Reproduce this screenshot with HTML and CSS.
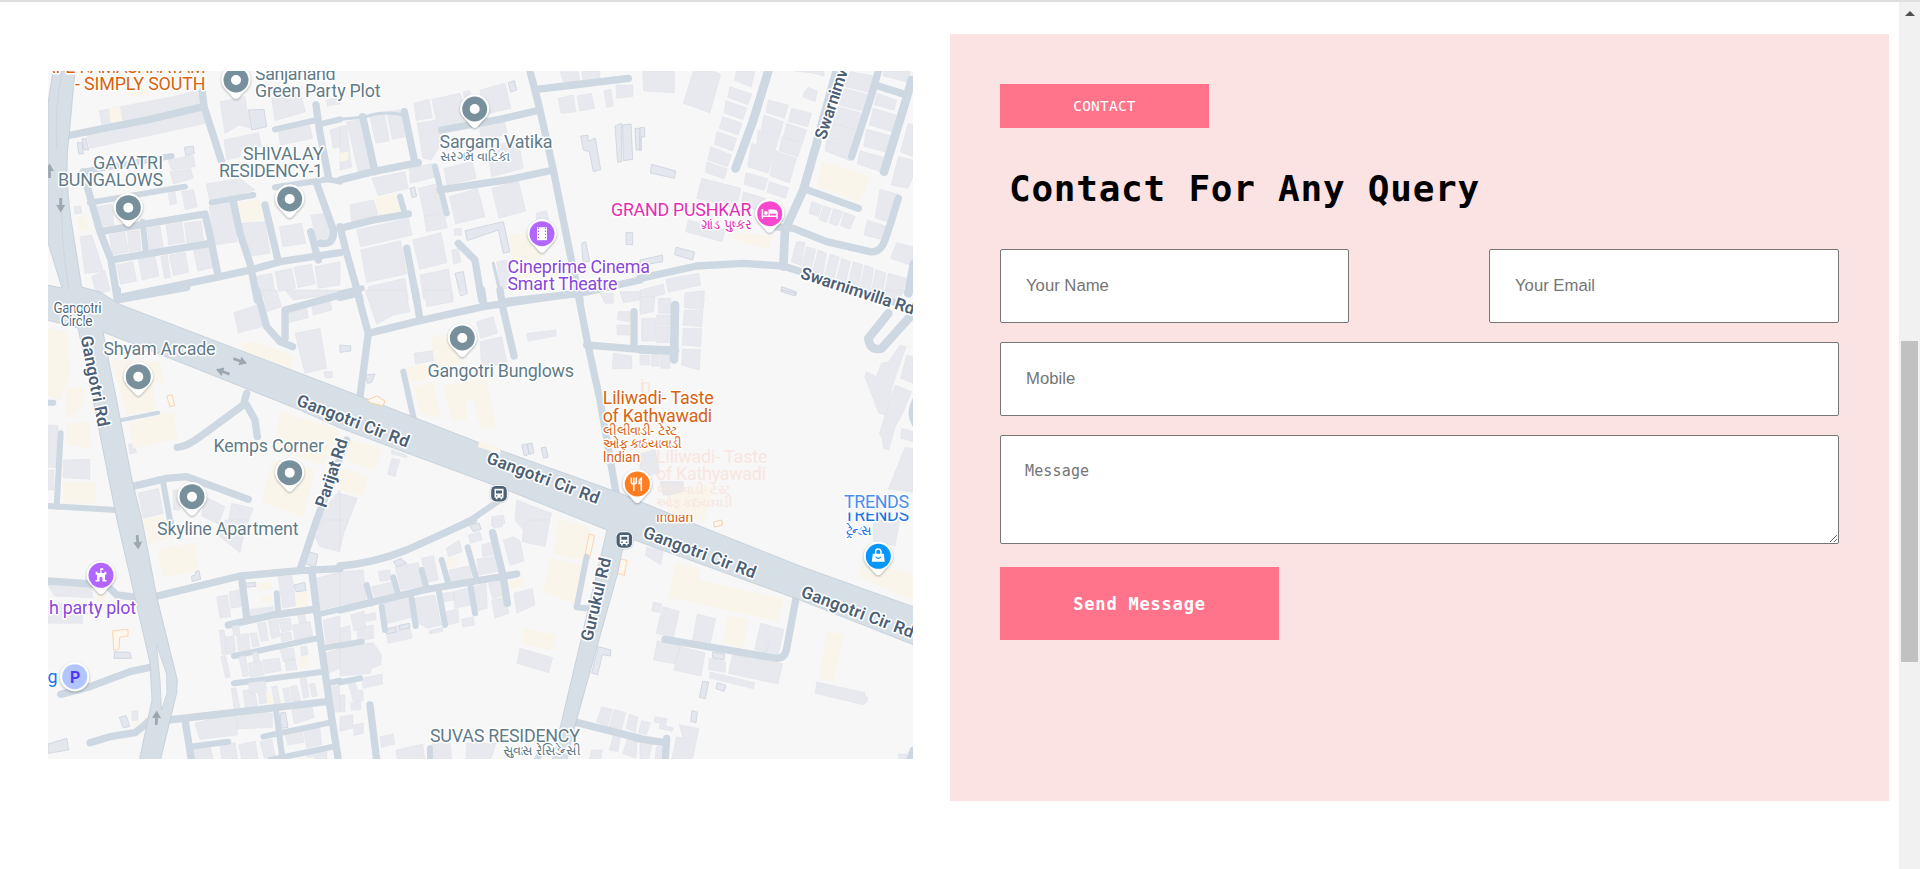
FILE: index.html
```
<!DOCTYPE html>
<html lang="en">
<head>
<meta charset="utf-8">
<title>Contact</title>
<link rel="stylesheet" href="styles.css">
</head>
<body>
<div class="page">
<main class="content">
<svg class="map" viewBox="48 71 865 688" width="865" height="688">
<defs>
<path id="pin" d="M-14.7 0A14.7 14.7 0 1 1 14.7 0C14.7 7 8 11 3 17.5Q0 20.500-3 17.500C-8 11-14.700 7-14.700 0Z"/>
<g id="place"><use href="#pin" class="pin-base"/><circle r="12.500" fill="#78909c"/><circle r="5" fill="#fff"/></g>
<g id="bus"><rect x="-9" y="-9" width="18" height="18" rx="6" fill="#fff" stroke="#c3cbd3" stroke-width=".6"/><rect x="-7.800" y="-7.800" width="15.600" height="15.600" rx="5" fill="#4a6076"/><path fill="#fff" d="M-4.500-5h9V4h-1.300v1.500h-1.700V4h-3v1.500h-1.700V4h-1.300z"/><path fill="#4a6076" d="M-3-3.200h6v3h-6zM-3 1.500h1.400v1.400H-3zM1.600 1.500H3v1.400H1.600z"/></g>
<path id="arrow" d="M-1.400-7H1.400V0H4.500L0 7.500-4.500 0H-1.400Z" fill="#9ca8b1"/>
<clipPath id="indianClip"><rect x="650" y="515" width="60" height="20"/></clipPath>
<clipPath id="trendsClip"><rect x="840" y="512.500" width="73" height="20"/></clipPath>
</defs>
<rect x="48" y="71" width="865" height="688" fill="#f7f7f7"/>

<!-- buildings -->
<g transform="translate(40 60) scale(.33333)">
<path class="b" d="M178 152L400 110 480 90 490 140 408 152 185 192ZM140 225L490 150 497 190 150 265ZM540 125L615 110 630 205 598 195 555 220ZM695 115L780 100 797 155 705 182ZM712 200L805 180 818 235 722 255ZM552 240L655 218 665 260 605 262 600 290 560 300ZM385 300L460 285 465 320 395 330ZM390 335L452 325 460 355 400 372ZM425 395L460 388 472 440 436 450ZM385 400l20-5 5 35-20 5ZM498 372L600 355 645 390 510 425ZM508 440L570 430 592 545 522 555ZM605 490L675 485 690 580 620 590ZM718 500L785 490 797 550 728 560ZM812 465L860 460 870 530 830 545ZM172 440L215 432 222 495 180 500ZM208 525L255 515 265 575 218 585ZM262 515L298 510 303 570 268 577ZM322 505L360 498 370 565 328 575ZM378 495l48-8 8 60-48 8ZM433 490l50-8 8 58-50 8ZM230 615l48-10 12 58-48 10ZM295 598l50-10 12 60-50 12ZM362 590l20-4 10 66-18 4ZM388 585l48-8 10 60-46 10ZM460 570l50-8 10 60-46 12ZM120 530l35-5 20 60 15 50-55 5ZM155 650l40-18 15 60-40 10ZM645 650l50-10 10 60-50 12ZM705 635l50-10 12 60-50 10ZM762 622l52-9 12 58-52 12ZM825 620l75-15v70l-65 10ZM870 210L900 200V260L880 265ZM860 120l40-8v20l-38 6ZM102 440l20-3 3 22-20 4Z"/>
<path class="o" d="M112 248h14l4 34h-14ZM126 236h12l8 34h-14ZM625 150L672 148 680 200 635 210ZM433 262L460 258 463 280 437 286Z"/>
<path class="y" d="M207 145L240 140 247 183 212 190ZM255 75L330 90 325 105 258 105ZM590 428L660 418 670 480 605 487ZM107 470l30-5 10 45-30 5ZM24 515h10v42h-10Z"/>
</g>
<g transform="translate(340 60) scale(.33333)">
<path class="b" d="M88 165l45-8 15 85-40 8ZM140 155l40-5 15 80-38 8ZM20 185l55-8 18 160-35 10ZM0 200l20-4 15 125-35 10ZM222 130l45-12 10 55-48 8ZM232 190l55-10 22 60-35 60-25-5ZM275 118l85-18 30 80-95 25ZM420 90l75-20 18 75-85 20ZM312 325l85-20 12 50-88 20ZM440 260l95-20 15 85-95 25ZM418 200l75-15 10 40-80 10ZM95 355l100-20 10 50-90 22ZM208 325l75-15 8 40-80 20ZM235 385l60-15 18 85-60 15ZM30 435l70-15 15 45-80 20ZM50 510l155-35 12 50-155 35ZM62 570l120-28 18 100-120 25ZM218 540l85-22 18 90-82 20ZM252 470l60-12 10 45-62 12ZM85 680l110-25 10 65H90ZM240 645l85-18 15 90H250ZM328 410l85-25 22 85-88 22ZM455 385l80-22 22 90-80 22ZM588 460l32-8 6 30-35 5ZM655 115l45-10 8 50-45 5ZM712 108l42-8 10 45-45 8ZM792 92l20-4 8 50-20 4ZM828 75h50v35l-48 5ZM660 35h55l5 30-45 12ZM725 33h55v30l-50 8ZM470 605l30-5 15 80-35 10ZM342 508l22-4v22h-20ZM335 570l20-4 8 40-22 6ZM370 95l20-3 3 20-20 3Z"/>
<path class="o" d="M505 68l18-6 7 28-18 6ZM375 512L490 485 510 575 490 580 475 510 382 542ZM725 550l12-5 12 58-20 5ZM345 640l25-5 12 65-20 8ZM858 518h20v36h-20ZM722 228l22-2v18l22-10 16 95-22 6-12-60-18-5ZM825 198l20-8v115l-12 2ZM848 195l25-3 5 106-28 4ZM885 205h15v65h-12ZM210 385l14-4 6 28-14 4Z"/>
<path class="y" d="M0 278l25-3v25l-25 5ZM105 415l65-15 10 60-65 12ZM508 525L600 510 612 640 530 660Z"/>
</g>
<g transform="translate(640 60) scale(.33333)">
<path class="b" d="M8 33h95v65l-92-5ZM160 33h60l22 10-32 115-80-28ZM290 33h55l-12 48-50-20ZM270 80l65 22-12 32-60-22ZM258 122l62 22-12 35-56-20ZM248 170l58 20-12 35-56-20ZM230 215l60 20-12 38-54-20ZM212 260l62 25-12 35-58-20ZM200 305l62 22-10 30-55-20ZM385 120l60 15-12 40-55-18ZM372 165l58 20-12 45-55-20ZM355 210l62 22-12 40-55-18ZM335 250l68 25-18 65-62-20ZM318 338l66 18-12 35-60-18ZM455 145l60 15-12 40-58-15ZM440 190l60 20-12 38-58-16ZM425 230l62 20-14 40-55-18ZM405 272l65 22-22 75-58-22ZM388 365l58 18-10 32-55-18ZM185 355l118 30-15 60-118-30ZM310 395l65 20-10 40-62-20ZM145 480l110 30-8 35-110-30ZM490 100l15-18 28 12-8 30-35-12ZM632 35l78 15-15 50-85-22ZM612 85l85 22-15 50-85-22ZM595 140l80 22-12 50-85-22ZM580 190l75 22-14 45-78-22ZM560 238l80 22-10 42-75-30ZM700 145l68 20-12 50-68-20ZM680 208l75 20-12 50-72-20ZM660 272l70 20-10 42-68-22ZM710 100l60 20-8 30-58-15ZM730 33h80v35l-80-20ZM805 190l14 5v95l-38-15ZM775 290l44 10v50l-15 35-50-10ZM720 388l55 15-25 85-45-15ZM682 480l60 20-12 40-58-15ZM515 425l30 10-10 35-28-10ZM550 437l24 8-15 42-22-8ZM580 445l28 10-16 42-24-8ZM612 457l34 12-16 38-28-10ZM770 548l49 12v40l-10 15-58-20ZM470 545l25 2-12 70-30-12ZM500 560l28 8-15 62-28-12ZM535 570l25 10-12 65-30-12ZM570 582l28 10-15 62-28-12ZM605 595l26 10-14 66-28-12ZM640 605l28 10-14 74-32-12ZM675 615l26 10-12 75-32-10ZM708 628l30 12-12 70-34-8ZM745 640l55 15-18 60-50-8ZM0 690l70-18 5 30-75 18ZM78 658l98-18 6 35-98 22ZM462 33h90v15l-40-10ZM135 705l50-12 8 27h-50Z"/>
<path class="o" d="M35 313l72 20-4 22-72-16ZM108 562l56 14-6 24-54-16ZM0 600l68-15v20l-68 12ZM425 680l45 16-3 10-43-16ZM0 203h14v28H4v40H0Z"/>
<path class="y" d="M545 302L692 350 660 425 530 380ZM280 515L395 530 385 570 275 535Z"/>
</g>
<g transform="translate(40 290) scale(.33333)">
<path class="b" d="M24 405l30 2v125H24ZM70 510l80-2v60l-80-5ZM24 540h18v60H24ZM265 462h15l10 25-20 5ZM582 68L650 45 668 110 595 128ZM668 0h42l15 50-45 15ZM735 0h165v10l-140 20ZM765 130L840 115 860 235 795 250ZM745 68l55-15 5 30-60 15ZM815 45l55-15 5 30-55 15ZM852 245h25v18h-22ZM295 610l60-15 15 75-60 15ZM495 620l60 30-20 52-50-25ZM575 640l65 15-20 50-55-10ZM400 600h15l5 60h-20ZM850 660l50-60v120h-70Z"/>
<path class="y" d="M24 115L80 125 90 250 60 330 24 320ZM75 290l60 5-5 45-30 45-20-5ZM80 400l70-5 5 80-75-10ZM215 210L360 215 372 275 340 280 350 360 260 375ZM265 400L400 365 415 445 280 475ZM600 160L650 155 760 200 755 235 610 185ZM720 365L900 420V440L850 525 700 480ZM700 510L825 540 790 680 665 635ZM68 575h98v65H68ZM310 690l60-15 8 45h-62Z"/>
<path class="r" d="M380 318l16-4 8 32-14 5Z"/>
</g>
<g transform="translate(340 290) scale(.33333)">
<path class="b" d="M75 0h120l15 65-50 10-50 28ZM255 0h75l10 35-80 15ZM410 95l50-15 12 50-50 15ZM420 155l65-15 15 75-75 25ZM222 190l55-8 5 30-55 10ZM560 130l88-10v18l-84 16ZM835 65h35v30l-38-5ZM830 105h38v30h-36ZM820 190l55 8v38h-58ZM155 505l25 5-15 50-22-8ZM0 610L52 625 15 720H0ZM530 630L635 670 620 720H550l-25-30ZM455 680l35-5 5 25-40 10ZM780 10h40v30h-25ZM840 5h60v25l-50 8ZM155 480l45 15v8l-45-12ZM355 0h25v15h-20Z"/>
<path class="y" d="M272 145L330 130 370 220 290 240ZM198 235l65-15 5 45-60 15ZM220 290l60-15 22 110-60-15ZM310 285L440 265 468 410 425 418 400 330 375 335 382 390 335 392ZM30 450L130 475 100 540 20 510ZM0 530L85 560 70 620 0 600ZM655 685l90 30h-92Z"/>
<path class="o" d="M545 465l15-3 8 30-15 6ZM562 462l14-3 6 30-14 4ZM603 474l14-3 8 30-14 4ZM0 165l32 3v15l-32 4ZM75 255l30-3-10 25-12 3Z"/>
</g>
<g transform="translate(640 290) scale(.33333)">
<path class="b" d="M0 20h45l-5 45-40 8ZM55 25h38v45h-38ZM50 75h40v30h-40ZM50 108h38v50h-38ZM5 85h42v68H5ZM135 8l58-5-3 55-57-5ZM133 60l56 0-4 50-56-5ZM130 115l55 0-3 55-56-5ZM127 178l54 0-3 62-53-15ZM0 195h30v30H0ZM35 193h23v36h-23ZM62 195h28v40h-28ZM780 165l18 5-40 115-20 90-22-5-22-60-20-50 5-15 30 15 15-40 22-5ZM765 285l50 20-25 60-24 45-20 70-15-5-5-30-8-15ZM800 195l20 5v80l-38-15ZM785 415l35 10v30l-38-10ZM795 472l25 5v130l-75-10ZM0 480h45l15 70-60 10ZM60 575h70v40h-60ZM725 0h85l-10 12Z"/>
<path class="y" d="M80 620l110-35 30 10-30 100-110-30ZM0 430h18l20 50-38 10Z"/>
<path class="o" d="M425 0l43 10-3 8-43-14Z"/>
</g>
<g transform="translate(40 520) scale(.33333)">
<path class="b" d="M540 50l15-50h65l-20 98ZM24 195h130l5 38-115-5ZM24 250h103v60H24ZM530 230l32-5 10 65-32 4ZM568 215l30-5 5 50-30 5ZM714 170l42-3 12 90-40 8ZM630 268l70-8 4 22-72 10ZM825 50l30-50h45v95l-60-15ZM538 330l14 0 12 55 18-3 4 18-40 5ZM552 352l30-5 5 45-30 5ZM590 345l35-4 5 45-35 8ZM630 340l20-2 8 40-20 4ZM652 310l25-4 8 55-22 3ZM685 302l28-4 8 50-26 8ZM715 298l36-4 5 35-30 8ZM758 315l52-10 8 42-55 12ZM722 340l30-4 4 22-32 8ZM772 280l20-3 8 30-22 3ZM542 410l15-3 14 64-14 3ZM597 410l18-3 12 60-18 3ZM625 430l40-6 8 40-42 8ZM640 400l14-2 4 26-16 3ZM668 420l50-6 6 38-48 8ZM720 388l40-4 6 34-36 8ZM735 420l30-4 6 32-32 4ZM782 380l18-2 4 26-20 3ZM574 505l14-2 12 60-18 3ZM608 512l35-5 10 50-36 8ZM655 520l28-3 6 30-30 5ZM695 500l16-3 10 52-18 3ZM728 506l18-3 10 40-20 4ZM750 500l20-4 12 46-22 4ZM780 475l18-4 10 60-18 4ZM808 492l16-2 8 38-16 3ZM465 610L590 575 592 645 480 658ZM592 590l65-15 40 5v42l-105 5ZM445 690l65-10 10 37H455ZM540 680l45-12 8 49H545ZM596 675l50-12 8 54H605ZM660 665l35-8 10 50-32 8ZM735 640l50-8 8 35-50 8ZM790 632l50-8 5 50-45 10ZM755 570l60-15 8 38-60 18ZM800 690l60-12v40h-60ZM828 175l72-18v100l-62 12ZM850 300l50-12v75l-42 8ZM855 400l45-15v60l-35 15ZM868 500l30-4 2 80-20 0ZM276 573h18v28h-18Z"/>
<path class="o" d="M455 168l12-4v-10l10-2 5 26-26 6ZM806 95l28 8-8 38-30-10ZM614 190l32-3 2 12-30 3ZM762 195l32-8 4 25-30 3ZM224 395l46 2 4 18-52 0ZM238 592l20-5 12 32-20 5ZM24 672L80 655 86 690 24 700ZM720 580l16-4 8 46-20 3ZM400 0v12h-10Z"/>
<path class="y" d="M350 88L465 68 475 150 370 172ZM315 0h70l10 50-70 25ZM652 190l40-4 6 20-42 6ZM662 228l34-3 3 18-36 4ZM765 220l35-6 4 44-36 8ZM775 410l28-4 4 34-28 4ZM678 515l14-2 10 36-20 3ZM170 220l25 0v22h-25ZM280 605l18-2 4 20-20 2ZM800 712h24v5h-24Z"/>
<path class="r" d="M218 332l46-4v20l-25 4-2 35-16 4Z"/>
</g>
<g transform="translate(340 520) scale(.33333)">
<path class="b" d="M0 155l70-5 8 92-78 15ZM95 200l65-15 8 40-62 12ZM115 155l35-6 5 30-35 5ZM165 140l70-12 14 70-66 12ZM245 115l35-8 16 72-40 8ZM318 85l40-25 8 35-40 15ZM328 150l60-12 8 45-65 10ZM425 75l32-10 10 38-38 8ZM385 45l35-10 6 25-35 10ZM410 118l60-10 8 45-62 12ZM490 60l30-10 20 12 12 60-42 14ZM550 20l20-20h60l-15 80-68-15ZM522 220l55-15 8 50-55 25ZM445 190l45-10 8 45-40 10ZM455 240l40-8 12 48-42 15ZM400 200l38-10 4 75-32 8ZM305 220l38-5 0 25-35 5ZM340 215l48-12 6 52-50 10ZM318 275l35-8 4 40-35 8ZM365 298l35-8 3 25-35 6ZM225 235l60-10 18 90-40 10-45-25ZM268 332l40-10v12l-40 8ZM128 250l78-18 8 60-75 20ZM138 325l70-15 8 45-72 15ZM32 285l40-12 6 50-36 10ZM75 285l30-8 4 22-30 6ZM50 325l50-10v40l-46 8ZM0 325l30-8 3 45-33 5ZM0 380L100 368 125 405 122 435 95 445 90 460 0 468ZM65 475L127 462 127 492 70 505ZM0 525h15v50H0ZM25 490l20-4 8 25 15 0 2 30-30 5ZM32 550l30-6v25l-28 2ZM0 590l38-6v40l-38 10ZM40 615l30-6v30l-28 8ZM120 650l40-8 4 30-40 10ZM168 690l80-18 6 45h-82ZM275 672l55-5 5 50h-55ZM380 670h88l-15 47h-75ZM540 385l98 28-12 45-95-28ZM770 605l15-45 32 8-14 52ZM808 620l14-52 35 10-12 50ZM858 625l10-42 26 8-8 46ZM808 690l12-45h22l-8 50ZM848 700l14-45h30l-4 60ZM755 690l32 0-4 27h-35ZM455 0h32v20l-25 5ZM0 0h22l-22 85Z"/>
<path class="o" d="M160 125l22-10 18 15-30 10ZM138 330l28-8 2 14-28 6ZM178 316l30-6v14l-28 6ZM775 380l38 10-2 18-24-4-14 60-18-5ZM388 15l28-6 8 18-24 8Z"/>
<path class="y" d="M320 115l30-6 4 28-30 8ZM505 185l42-10 4 22-38 10ZM655 0l95 20-18 100-92-18ZM628 115l105 20-30 115-92-35ZM552 325l98 20-8 48-94-20Z"/>
<path class="r" d="M748 42l16 4-15 68-15-5ZM833 115l28 6-8 45-28-8Z"/>
</g>
<g transform="translate(640 520) scale(.33333)">
<path class="b" d="M20 80l50 12-8 42-46-28ZM40 246l25 6-6 26-24-6ZM68 260L118 274 100 352 48 340ZM172 282l55 14-18 82-52-14ZM362 310l34 8-16 80-36-10ZM400 320l32 8-18 78-34-12ZM52 362l70 16-16 54-66-12ZM120 380l75 18-12 70-82-18ZM208 415l48 10v32l-50-8ZM278 400L428 432 414 492 266 460ZM210 456l134 32-4 18-132-32ZM530 486l145 32v10l8 4-2 14-12 8-143-34ZM700 0h80l-15 78-65-15ZM45 590l36 6-4 18-34-8ZM60 612l40 12-4 10-38-8ZM5 602l26 6-12 38-24-8ZM118 614l58 12-18 90H95l6-25 8-40 20 2ZM0 665l36 8-10 44H0ZM50 678l16 4-4 35H45ZM775 702h26v14h-24Z"/>
<path class="o" d="M218 396l36 6-2 18-34-6ZM188 484l18 2-10 50-18-4ZM232 488l26 8-6 18-24-8ZM156 572l16 4-4 32-16-4Z"/>
<path class="y" d="M106 130L180 145 178 180 432 238 414 304 86 232ZM262 288l64 10-16 86-60-12ZM558 332l54 12-32 142-42-12 20-125ZM665 130L819 160V240L658 172Z"/>
</g>

<!-- local streets -->
<g class="road" transform="translate(40 60) scale(.33333)">
<path class="w22" d="M80 228L190 205 330 178 490 140M487 95L492 140 545 305M130 335L150 410 180 515 213 600 232 720M180 515L495 462 515 550 535 650M213 600L510 550M240 712L540 650 640 628 720 605 900 578M580 425L600 520 630 610 652 720M675 435L715 605M828 135L840 220 865 350M830 370L880 510Q885 555 840 550M812 515L835 600"/>
<path class="w18" d="M130 335L395 288M150 428L435 380M308 485L318 580M515 428L640 405M705 382L865 358 900 365M705 208L830 180M850 190L900 178"/>
</g>
<g class="road" transform="translate(340 60) scale(.33333)">
<path class="w22" d="M570 33L600 150 640 330 690 580 720 720M590 88L700 75 865 55M305 210L480 178 600 150M68 170L105 335M193 155L225 310M0 360L100 335 235 308M300 390L500 360 640 330M0 505L100 480 205 462M0 500L20 580 60 720M355 550L405 600 425 720M200 565L230 720M500 724L720 700 900 660"/>
<path class="w18" d="M285 320L300 380 320 460M180 410L195 462M0 700L65 685"/>
<path class="w10" d="M0 178L70 172Q130 150 190 165M460 610L485 720"/>
</g>
<g class="road" transform="translate(640 60) scale(.33333)">
<path class="w26" d="M385 33L340 180 287 325M590 33L530 250 490 390 435 510 430 620M815 60L795 130 732 335M822 610L805 700"/>
<path class="w22" d="M715 33L690 120 635 290M705 75L800 105M490 385L655 445M400 500L460 505 560 545 690 575Q720 580 735 540L755 480 775 415M0 655L170 618 310 610 430 618 700 705 830 750"/>
</g>
<g class="road" transform="translate(40 290) scale(.33333)">
<path class="w22" d="M232 0L232 30 440-8M650 0L680 110 720 155 758 170M735 145L735 60 900 15M620 310L610 345 480 440Q440 470 412 472M620 345L645 390 652 440M275 590L380 565 440 560 625 628"/>
<path class="w18" d="M370 580L395 720M62 430L50 650M24 648L230 660M20 338L40 338"/>
<path class="w12" d="M245 390L355 368"/>
</g>
<g class="road" transform="translate(340 290) scale(.33333)">
<path class="w22" d="M50 0L85 130 60 320M0 22L50 10M225 0L240 90M85 130L240 92 430 50 720 8M425 0L432 50M480 0L490 60 522 198M715 15L745 170 780 330 830 620M740 165L900 178M882 65L882 170"/>
<path class="w18" d="M190 245L222 390M300 735L400 685 480 630"/>
</g>
<g class="road" transform="translate(640 290) scale(.33333)">
<path class="w26" d="M0 178L105 182M105 45L102 208M745 70L685 145Q690 185 725 175L815 75"/>
<path class="w18" d="M826 330Q804 370 826 405"/>
</g>
<g class="road" transform="translate(40 520) scale(.33333)">
<path class="w22" d="M345 230L600 168 780 152 900 146M920-240L830 0 780 150M605 175L620 290M565 315L700 285 820 268M815 150L840 350 870 560 895 720M385 600L860 545M435 600L455 725M24 183L200 195 230 225 290 232M62 523L150 500 270 455 330 442M150 668L210 650 285 638Q310 620 330 600"/>
<path class="w18" d="M710 220L715 280M582 408L830 355M582 490L850 455M450 680L565 665M670 650L870 608M708 570L728 720M690 720L880 680M830 284L900 268M845 385L900 375M860 490L900 482"/>
</g>
<g class="road" transform="translate(340 520) scale(.33333)">
<path class="w22" d="M0 138Q100 130 200 90L400 0M0 270L250 210 530 162M458 38L490 170 502 250M90 555L110 720M700 605L840 640 900 655"/>
<path class="w18" d="M80 195L95 250M160 172L175 225M245 150L260 205M305 120L325 190M383 82L410 180M295 205L315 315M390 190L405 280M125 260L135 330M215 235L227 318M0 377L65 365M0 487L60 475M740 110L710 262 740 265M270 685L270 720M590 720L600 705"/>
</g>
<g class="road" transform="translate(640 520) scale(.33333)">
<path class="w22" d="M75 358L410 415Q435 415 440 385L468 235M-10 655L75 668M80 655L75 725M820 690L808 725"/>
</g>
<g transform="translate(40 520) scale(.33333)"><path class="b" d="M597 410l18-3 6 30-18 3ZM638 398l14-2 6 26-16 3ZM576 318l20-3 4 28-20 3ZM625 488l50-5 5 30-50 8Z"/></g>

<!-- main roads -->
<path class="hw" d="M53 71H75L69.300 133Q64 170 70.700 217L81.700 287 100 292 120 304.500 340 388.500 480 443 617 492 707 529 800 566 914 607V645L800 600 640 542 625 537 618 572 576 722 566 762H552L560 728 607 530 507 490 407 453 340 428 300 410 187 365 103 332 117 402 132 480 142 520 157 598 177.300 680 176.700 693 160 762H139L152 700 150 663 117 520 93 400 78 328 47 320V285L62 288 48 243V103Z"/>
<path fill="#f7f7f7" stroke="#c3cdd7" stroke-width=".7" d="M156.500 645L166.500 674 167 693 161.500 710 160 680Z"/>
<path fill="none" stroke="#c9d3dc" stroke-width=".8" d="M62 72Q54 110 57 150M69 290Q60 240 62 190"/>
<path fill="#faf5ea" d="M479 441l22 7-1 6-22-7z"/>
<path class="r1" d="M367 400l10-4 8 5-2 5-12-3ZM713.500 522l8-2 1 5-8 2Z"/>
<g><use href="#arrow" transform="translate(49.500 171) rotate(180)"/><use href="#arrow" transform="translate(60.700 205)"/><use href="#arrow" transform="translate(240 361) rotate(-70)"/><use href="#arrow" transform="translate(223 371.700) rotate(110)"/><use href="#arrow" transform="translate(137.700 542) rotate(-5)"/><use href="#arrow" transform="translate(156.500 718) rotate(182)"/></g>

<!-- street names -->
<g class="street">
<text transform="translate(825.500 140.500) rotate(-72)" textLength="118">Swarnimvilla Rd</text>
<text transform="translate(799.500 278) rotate(18)" textLength="119">Swarnimvilla Rd</text>
<text transform="translate(80.500 337) rotate(79)" textLength="92">Gangotri Rd</text>
<text transform="translate(295.500 405) rotate(21)" textLength="119">Gangotri Cir Rd</text>
<text transform="translate(485.500 462.500) rotate(20.500)" textLength="119">Gangotri Cir Rd</text>
<text transform="translate(642 537) rotate(20.500)" textLength="119">Gangotri Cir Rd</text>
<text transform="translate(800 596.500) rotate(20.500)" textLength="119">Gangotri Cir Rd</text>
<text transform="translate(326 508.500) rotate(-72)" textLength="71">Parijat Rd</text>
<text transform="translate(592 642) rotate(-77)" textLength="85">Gurukul Rd</text>
</g>

<!-- place markers -->
<use href="#place" x="236" y="80"/><use href="#place" x="128.300" y="207.700"/><use href="#place" x="289.700" y="199"/><use href="#place" x="474.700" y="109"/><use href="#place" x="138.300" y="376.700"/><use href="#place" x="289.700" y="472.700"/><use href="#place" x="192" y="496.700"/><use href="#place" x="462.300" y="338"/>
<g transform="translate(542 233.700)"><use href="#pin" class="pin-base"/><circle r="12.500" fill="#b366ff"/><path fill="#fff" d="M-5-6.500h10v13H-5z"/><path stroke="#b366ff" stroke-width="1.200" stroke-dasharray="1.400 1.700" d="M-3.500-6.200V6.500M3.500-6.200V6.500"/></g>
<g transform="translate(769.700 213.700)"><use href="#pin" class="pin-base"/><circle r="12.500" fill="#f848d0"/><path fill="none" stroke="#fff" stroke-width="1.500" d="M-7.300-4.800V5M7.300 5V-1Q7-3.500 4-3.500H-.5V2.500M-7.300 2.600H7.300"/><circle cx="-3.800" cy="-.8" r="1.900" fill="#fff"/><path fill="#fff" d="M-.5-3.500H4Q7-3.500 7.300-1V0H-.5z"/></g>
<g transform="translate(637.300 484)"><use href="#pin" class="pin-base"/><circle r="12.500" fill="#ff7d22"/><path fill="none" stroke="#fff" stroke-width="1.500" d="M-6-6.500V-2Q-6 0-3.500 0T-1-2V-6.500M-3.500-6.500V7M4 7V-6Q1.800-4.500 1.800-.5H4"/></g>
<g transform="translate(878.300 556.300)"><use href="#pin" class="pin-base"/><circle r="12.500" fill="#0796fb"/><path fill="#fff" d="M-5.500-2.500h11L6.500 5.500h-13z"/><path fill="none" stroke="#fff" stroke-width="1.500" d="M-2.700-2V-4.500a2.700 2.700 0 0 1 5.400 0V-2"/><path fill="none" stroke="#0796fb" stroke-width="1.200" d="M-2.500.5Q0 3.500 2.500.5"/></g>
<g transform="translate(101 575.300)"><use href="#pin" class="pin-base"/><circle r="12.500" fill="#b366ff"/><path fill="#fff" d="M-5.300 -3.500H-3.500V-2.300H3.500V-3.500H5.300V-.5H4V4.700H5.500V6.200H1.500V3A1.500 1.500 0 0 0 -1.500 3V6.200H-5.500V4.700H-4V-.5H-5.300ZM-.7 -7H2.200V-5.200H.5V-2H-.7Z"/></g>
<g transform="translate(74.700 676.700)"><circle r="14.700" class="pin-base"/><circle r="12.500" fill="#b2c5ff"/><text class="parking" x="-4.800" y="5.800">P</text></g>
<use href="#bus" x="499" y="493.700"/><use href="#bus" x="624.300" y="540"/>

<!-- place names -->
<g class="name orange">
<text x="75.500" y="72.500" text-anchor="end">CAFE</text><text x="79.500" y="72.500" textLength="126">RAMASHRAYAM</text><text x="75" y="90" textLength="130.500">- SIMPLY SOUTH</text>
<text x="602.700" y="404.300" textLength="111">Liliwadi- Taste</text><text x="602.700" y="421.700" textLength="109.500">of Kathyawadi</text>
<text class="guj" x="602.700" y="435" textLength="75">લીલીવાડી- ટેસ્ટ</text><text class="guj" x="602.700" y="448.300" textLength="79">ઓફ કાઠયાવાડી</text><text class="small" x="602.700" y="462.300" textLength="37.500">Indian</text>
<text class="small" clip-path="url(#indianClip)" x="656" y="522" textLength="37">Indian</text>
</g>
<g class="name ghost">
<text x="640" y="391.700" textLength="11">in</text>
<text x="656" y="462.700" textLength="111.500">Liliwadi- Taste</text><text x="656" y="480" textLength="110">of Kathyawadi</text><text class="guj" x="656" y="494" textLength="74">લીલીવાડી- ટેસ્ટ</text><text class="guj" x="656" y="507.300" textLength="77">ઓફ કાઠયાવાડી</text>
</g>
<g class="name slate">
<text x="255" y="79.500" textLength="80.500">Sanjanand</text><text x="255" y="96.700" textLength="125.500">Green Party Plot</text>
<text x="93" y="168.700" textLength="70">GAYATRI</text><text x="58" y="186" textLength="105">BUNGALOWS</text>
<text x="243" y="160" textLength="80.500">SHIVALAY</text><text x="219" y="177" textLength="104">RESIDENCY-1</text>
<text x="439.500" y="147.700" textLength="113">Sargam Vatika</text><text class="guj" x="440" y="161" textLength="70">સરગમ વાટિકા</text>
<text x="103.500" y="355" textLength="112">Shyam Arcade</text><text x="213.500" y="451.700" textLength="110.500">Kemps Corner</text><text x="157" y="535.300" textLength="141.500">Skyline Apartment</text><text x="427.500" y="377.300" textLength="146.500">Gangotri Bunglows</text>
<text x="430" y="741.700" textLength="150">SUVAS RESIDENCY</text><text class="guj" x="501.500" y="755" textLength="78.500">સુવાસ રેસિડેન્સી</text>
</g>
<g class="name dark"><text class="small" x="53.500" y="313.300" textLength="48">Gangotri</text><text class="small" x="60.500" y="325.700" textLength="32">Circle</text></g>
<g class="name purple"><text x="507.500" y="272.700" textLength="142.500">Cineprime Cinema</text><text x="507.500" y="290" textLength="110">Smart Theatre</text><text x="49" y="614" textLength="87">h party plot</text></g>
<g class="name magenta"><text x="611" y="216" textLength="140.500">GRAND PUSHKAR</text><text class="guj" x="700.500" y="229" textLength="51">ગ્રાંડ પુષ્કર</text></g>
<g class="name blue"><text class="pale" x="844" y="508.300" textLength="65">TRENDS</text><text clip-path="url(#trendsClip)" x="844" y="520.700" textLength="65">TRENDS</text><text class="guj" x="844" y="535" textLength="26">ટ્રેન્ડસ</text><text x="47.500" y="683" textLength="8.500">g</text></g>
</svg>

<section class="contact">
<div class="tag">CONTACT</div>
<h1 class="title">Contact For Any Query</h1>
<form class="form">
<div class="row"><input class="field" type="text" placeholder="Your Name"><input class="field" type="email" placeholder="Your Email"></div>
<input class="field" type="text" placeholder="Mobile">
<textarea class="field message" placeholder="Message"></textarea>
<button class="send" type="button">Send Message</button>
</form>
</section>
</main>
<div class="scrollbar"><svg class="up" width="10" height="5" viewBox="0 0 10 5"><path d="M0 5L5 0l5 5z" fill="#505050"/></svg><div class="thumb"></div></div>
</div>
</body>
</html>
```
FILE: styles.css
```
* { box-sizing: border-box; }
body { margin: 0; background: #fff; font-family: "DejaVu Sans Mono", monospace; overflow: hidden; }
.page { display: flex; height: 869px; border-top: 2px solid #dfdfdf; }
.content { display: flex; flex: 1; align-items: flex-start; gap: 37px; padding: 32px 10px 0 48px; }
.map { display: block; flex: none; margin-top: 37px; }
.contact { flex: none; width: 939px; height: 767px; padding: 50px; background: #fbe3e3; }
.tag { display: flex; align-items: center; justify-content: center; width: 209px; height: 44px; background: #ff748b; color: #fff; font-size: 14.500px; letter-spacing: .2px; }
.title { margin: 36px 0 0 9px; height: 50px; line-height: 50px; font-size: 36px; font-weight: 700; letter-spacing: .75px; color: #000; white-space: nowrap; }
.form { display: flex; flex-direction: column; gap: 19px; margin-top: 35px; width: 839px; }
.row { display: flex; justify-content: space-between; }
.field { display: block; width: 100%; height: 74px; margin: 0; padding: 0 25px; border: 1px solid #767676; border-radius: 2px; background: #fff; font: 16.700px "Liberation Sans", Arial, sans-serif; }
.row .field { width: 350px; }
.row .field:first-child { width: 349px; }
.field::placeholder { color: #757575; }
.field.message { height: 109px; padding: 25px 24px; font: 15px/20px "DejaVu Sans Mono", monospace; letter-spacing: .15px; }
.send { width: 279px; height: 73px; margin-top: 4px; padding: 0; border: 0; background: #ff748b; color: #fff; font: 700 17px "DejaVu Sans Mono", monospace; letter-spacing: .800px; }
.scrollbar { display: flex; flex-direction: column; align-items: center; width: 21px; background: #f1f1f1; }
.up { margin-top: 9px; }
.thumb { width: 17px; height: 321px; margin-top: 325px; background: #c1c1c1; }

.b { fill: #e8e9ee; stroke: #dfe1e8; stroke-width: 1.500px; }
.o { fill: #e4e7ed; stroke: #ccd3dd; stroke-width: 2.500px; }
.y { fill: #faf5ea; }
.r { fill: #fff6ec; stroke: #fbd3b4; stroke-width: 3px; }
.r1 { fill: #fff6ec; stroke: #f3d2ae; stroke-width: 1px; }
.road { fill: none; stroke: #cdd8e2; stroke-linecap: round; stroke-linejoin: round; }
.w26 { stroke-width: 26px; }
.w22 { stroke-width: 22px; }
.w18 { stroke-width: 18px; }
.w12 { stroke-width: 12px; }
.w10 { stroke-width: 9px; }
.hw { fill: #d7dfe6; stroke: #c1ccd6; stroke-width: .8px; }
.pin-base { fill: #fff; filter: drop-shadow(0 1px 1px rgba(60, 70, 80, .4)); }
.name, .street { font-family: Roboto, "Noto Sans", sans-serif; stroke: #fff; stroke-linejoin: round; }
.name { font-size: 17.900px; stroke-width: 3px; }
.name text, .street text { paint-order: stroke; }
.name .small { font-size: 13.800px; }
.name .guj { font-size: 12.500px; word-spacing: 2px; }
.street { font-size: 17px; font-weight: 600; fill: #4c6075; stroke-width: 3px; }
.orange { fill: #d9620f; }
.name.ghost { fill: #f8e6df; stroke: none; }
.slate { fill: #5f7b88; }
.dark { fill: #53687b; }
.purple { fill: #8b46dc; }
.magenta { fill: #e42db5; }
.blue { fill: #1a73e8; }
.pale { fill: #4b8eee; }
.name .pale { stroke-width: 2px; }
.parking { font: 700 16px Roboto, sans-serif; fill: #5339f3; }
```
